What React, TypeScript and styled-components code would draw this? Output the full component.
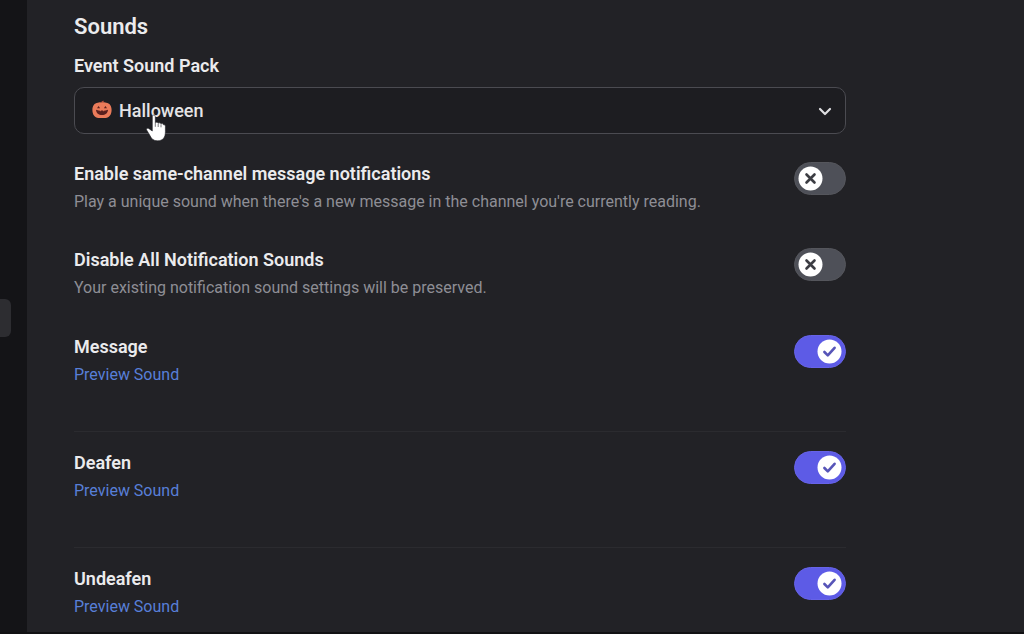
import React, { useId, useState } from "react";
import styled, { createGlobalStyle } from "styled-components";

const GlobalStyle = createGlobalStyle`
  *, *::before, *::after { box-sizing: border-box; }
  body {
    margin: 0;
    background: #222226;
    color: #ebebed;
    font-family: Roboto, "Liberation Sans", sans-serif;
  }
`;

const Shell = styled.div`
  display: flex;
  height: 100vh;
  overflow: hidden;
  border-bottom: 2px solid #111113;
`;

const Sidebar = styled.nav`
  display: flex;
  align-items: center;
  flex: 0 0 27px;
  padding-top: 4px;
  background: #141417;
`;

const ActiveItem = styled.span`
  width: 11px;
  height: 38px;
  border-radius: 0 6px 6px 0;
  background: #2d2d31;
`;

const Main = styled.main`
  flex: 1;
  min-width: 0;
  padding: 13px 47px;
`;

const Content = styled.div`
  max-width: 772px;
`;

const Title = styled.h1`
  margin: 0 0 13px;
  font-size: 22px;
  line-height: 28px;
  font-weight: 600;
`;

const FieldLabel = styled.label`
  display: block;
  font-size: 18px;
  line-height: 24px;
  font-weight: 600;
`;

const SelectBox = styled.div`
  position: relative;
  margin: 9px 0 28px;
`;

const PackSelect = styled.select`
  display: block;
  width: 100%;
  height: 47px;
  padding: 0 44px;
  appearance: none;
  border: 1px solid #4b4b51;
  border-radius: 10px;
  background: #1d1d21;
  color: #e4e4e6;
  font: 500 18px/24px Roboto, "Liberation Sans", sans-serif;
  cursor: pointer;
`;

const PumpkinIcon = styled.svg`
  position: absolute;
  left: 18px;
  top: 11px;
  pointer-events: none;
`;

const ChevronIcon = styled.svg`
  position: absolute;
  right: 13px;
  top: 16px;
  pointer-events: none;
`;

const Pointer = styled.svg`
  position: absolute;
  left: 71px;
  top: 27px;
  pointer-events: none;
`;

const Group = styled.section`
  display: grid;
  gap: 35px;
  margin-bottom: 36px;
`;

const Row = styled.div`
  display: flex;
  justify-content: space-between;
  align-items: flex-start;
  gap: 24px;
`;

const EventRow = styled(Row)`
  padding-bottom: 45px;
  margin-bottom: 19px;
  border-bottom: 1px solid #2b2b2f;
`;

const RowText = styled.div`
  display: grid;
  justify-items: start;
  gap: 5px;
`;

const Description = styled.p`
  margin: 0;
  font-size: 16px;
  line-height: 22px;
  color: #8e8e95;
`;

const PreviewButton = styled.button`
  padding: 0;
  border: 0;
  background: none;
  color: #587fd8;
  font: 400 16px/22px Roboto, "Liberation Sans", sans-serif;
  cursor: pointer;
`;

const SwitchBox = styled.span`
  position: relative;
  flex: none;
  width: 52px;
  height: 33px;
`;

const SwitchInput = styled.input`
  display: block;
  width: 100%;
  height: 100%;
  margin: 0;
  appearance: none;
  border: 1px solid #55565c;
  border-radius: 17px;
  background: #4e5058;
  cursor: pointer;

  &:checked {
    border-color: #6763e8;
    background: #5d5be6;
  }
`;

const Knob = styled.svg<{ $on: boolean }>`
  position: absolute;
  top: 4px;
  left: ${({ $on }) => ($on ? 23 : 4)}px;
  pointer-events: none;
`;

function Switch({ id, initial }: { id: string; initial: boolean }) {
  const [on, setOn] = useState(initial);
  return (
    <SwitchBox>
      <SwitchInput
        id={id}
        type="checkbox"
        checked={on}
        onChange={(e) => setOn(e.target.checked)}
      />
      <Knob $on={on} width="25" height="25" viewBox="0 0 25 25" aria-hidden="true">
        <circle cx="12.5" cy="12.5" r="12" fill="#fff" />
        <path
          d={on ? "M7.4 13l3.4 3.4 6.800-7.600" : "M8.500 8.500l8 8M16.500 8.500l-8 8"}
          fill="none"
          stroke={on ? "#5755b8" : "#3c3d43"}
          strokeWidth="2.6"
          strokeLinecap="round"
          strokeLinejoin="round"
        />
      </Knob>
    </SwitchBox>
  );
}

function Setting({ label, description }: { label: string; description: string }) {
  const id = useId();
  return (
    <Row>
      <RowText>
        <FieldLabel htmlFor={id}>{label}</FieldLabel>
        <Description>{description}</Description>
      </RowText>
      <Switch id={id} initial={false} />
    </Row>
  );
}

function SoundEvent({ label }: { label: string }) {
  const id = useId();
  return (
    <EventRow>
      <RowText>
        <FieldLabel htmlFor={id}>{label}</FieldLabel>
        <PreviewButton type="button">Preview Sound</PreviewButton>
      </RowText>
      <Switch id={id} initial />
    </EventRow>
  );
}

export default function App() {
  return (
    <>
      <GlobalStyle />
      <Shell>
        <Sidebar>
          <ActiveItem />
        </Sidebar>
        <Main>
          <Content>
            <Title>Sounds</Title>
            <FieldLabel htmlFor="sound-pack">Event Sound Pack</FieldLabel>
            <SelectBox>
              <PackSelect id="sound-pack" defaultValue="halloween">
                <option value="halloween">Halloween</option>
              </PackSelect>
              <PumpkinIcon width="20" height="22" viewBox="0 0 20 22" aria-hidden="true">
                <path d="M9 6C8.800 4 9.800 2.600 11.800 2.700L11.300 6z" fill="#b0503f" />
                <path
                  d="M10 4.700c1.200-.8 3-.7 4.200 0 3.400.2 5.400 3.400 5.400 7.200 0 4.300-2.300 8-6 8H6.400c-3.700 0-6-3.700-6-8 0-3.800 2-7 5.400-7.200 1.200-.7 3-.8 4.200 0z"
                  fill="#ea7b5a"
                />
                <path d="M5 10.300l1.600-2.300 1.500 2.300zM11.900 10.300L13.400 8 15 10.300z" fill="#5a201e" />
                <path
                  d="M4 11.700l2.600.8h1l.5.900.9-.8h2l.9.800.5-.9h1l2.600-.8c-.2 3.400-2.700 5.400-6 5.400s-5.800-2-6-5.400z"
                  fill="#5a201e"
                />
              </PumpkinIcon>
              <ChevronIcon width="16" height="16" viewBox="0 0 16 16" aria-hidden="true">
                <path
                  d="M3 6l5 5 5-5"
                  fill="none"
                  stroke="#dedee1"
                  strokeWidth="2.2"
                  strokeLinecap="round"
                  strokeLinejoin="round"
                />
              </ChevronIcon>
              <Pointer width="22" height="28" viewBox="0 0 22 28" aria-hidden="true">
                <path
                  d="M7.300 2.800c0-1 .6-1.700 1.500-1.700s1.500.7 1.500 1.700v6c.3-.7 2.600-.7 2.900.4.500-.6 2.600-.4 2.800.7.700-.6 2.400-.2 2.700 1 .7-.3 1.700.2 1.700 1.400v5.400c0 5.900-2.600 9.100-8 9.100-3.800 0-5.700-1.700-7.300-5l-3.500-5.900c-.7-1.200.8-2.300 2-1.500l3.700 2.600z"
                  fill="#fff"
                  stroke="#1d1d21"
                  strokeWidth=".6"
                />
                <path d="M10.300 8.800v4M13.200 9.500v3.500M16 10.300v3" stroke="#55555b" strokeWidth=".8" />
              </Pointer>
            </SelectBox>
            <Group>
              <Setting
                label="Enable same-channel message notifications"
                description="Play a unique sound when there's a new message in the channel you're currently reading."
              />
              <Setting
                label="Disable All Notification Sounds"
                description="Your existing notification sound settings will be preserved."
              />
            </Group>
            <SoundEvent label="Message" />
            <SoundEvent label="Deafen" />
            <SoundEvent label="Undeafen" />
          </Content>
        </Main>
      </Shell>
    </>
  );
}
